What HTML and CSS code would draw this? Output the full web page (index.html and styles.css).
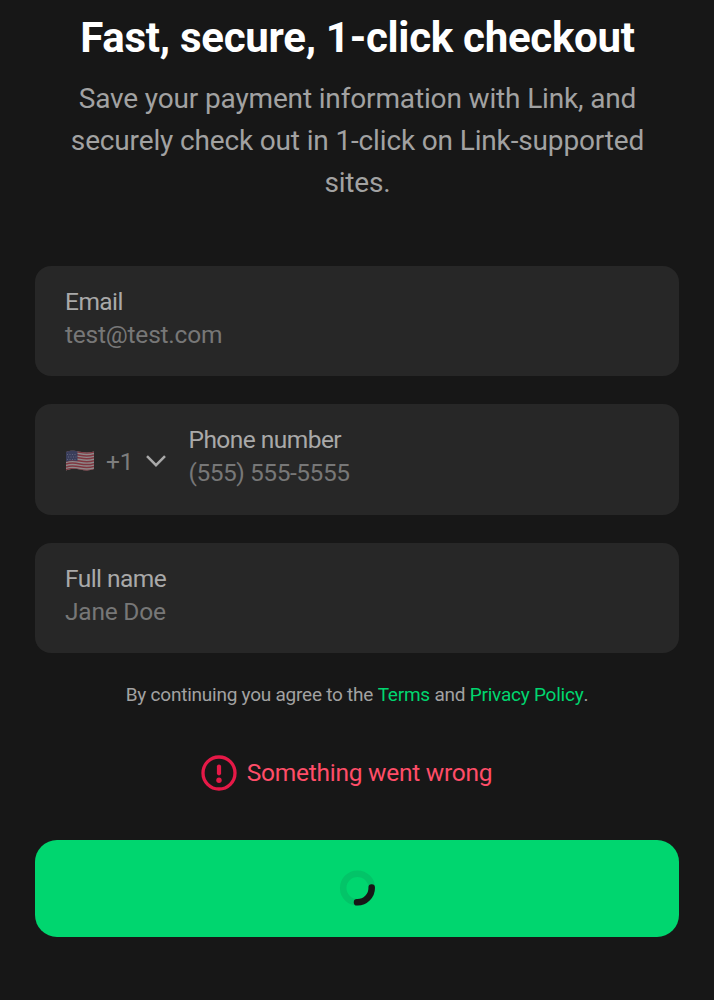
FILE: index.html
```html
<!DOCTYPE html>
<html lang="en">
<head>
<meta charset="utf-8">
<title>Link checkout</title>
<link rel="stylesheet" href="styles.css">
</head>
<body>
<main class="sheet">
  <h1 class="title">Fast, secure, 1-click checkout</h1>
  <p class="subtitle">Save your payment information with Link, and<br>securely check out in 1-click on Link-supported<br>sites.</p>
  <form class="form">
    <div class="field">
      <div class="text"><div class="label">Email</div><div class="hint">test@test.com</div></div>
    </div>
    <div class="field">
      <div class="country">
        <svg class="flag" viewBox="0 0 30 24" width="30" height="24">
          <defs><clipPath id="wave"><path d="M1 3C6 1 10 1.800 15 2.800S24 4 29 2.500v17.500c-5 2-9 1.500-14 .5S6 19.500 1 21.500Z"/></clipPath></defs>
          <g clip-path="url(#wave)">
            <path fill="#8e898a" d="M0 0h30v24H0z"/>
            <g fill="none" stroke="#803640" stroke-width="1.500">
              <path d="M1 3.500C6 1.500 10 2.300 15 3.300S24 4.500 29 3"/>
              <path d="M1 6.400C6 4.400 10 5.200 15 6.200S24 7.400 29 5.900"/>
              <path d="M1 9.300C6 7.300 10 8.100 15 9.100S24 10.300 29 8.800"/>
              <path d="M1 12.200C6 10.200 10 11 15 12S24 13.200 29 11.700"/>
              <path d="M1 15.100C6 13.100 10 13.900 15 14.900S24 16.100 29 14.600"/>
              <path d="M1 18C6 16 10 16.800 15 17.800S24 19 29 17.500"/>
              <path d="M1 20.900C6 18.900 10 19.700 15 20.700S24 21.900 29 20.400"/>
            </g>
            <path fill="#3a3e5b" d="M0 0h12.500v12C8 11 5 11.200 0 13Z"/>
            <path d="M2 5.500h10M3 8h9M2 10.500h10" stroke="#60637a" stroke-width="1" stroke-dasharray="1 1.500"/>
          </g>
        </svg>
        <span class="code">+1</span>
        <svg class="chevron" viewBox="0 0 20 12" width="20" height="12"><path d="M1 1.200 10 10.200l9-9" fill="none" stroke="#a9a9a9" stroke-width="2.500"/></svg>
      </div>
      <div class="text"><div class="label">Phone number</div><div class="hint phone">(555) 555-5555</div></div>
    </div>
    <div class="field">
      <div class="text"><div class="label">Full name</div><div class="hint">Jane Doe</div></div>
    </div>
  </form>
  <p class="terms">By continuing you agree to the <a>Terms</a> and <a>Privacy Policy</a>.</p>
  <div class="error">
    <svg viewBox="0 0 36 36" width="36" height="36"><circle cx="18" cy="18" r="16" fill="none" stroke="#e61947" stroke-width="3.300"/><path d="M18 11.500v6.800" stroke="#e61947" stroke-width="4.200" stroke-linecap="round"/><circle cx="18" cy="25.200" r="2.700" fill="#e61947"/></svg>
    <span>Something went wrong</span>
  </div>
  <button class="submit" type="button" aria-label="Loading">
    <svg viewBox="0 0 36 36" width="36" height="36"><circle cx="18.500" cy="18" r="14.300" fill="none" stroke="#03c468" stroke-width="6.500"/><path d="M32.700 17.400A14.300 14.300 0 0 1 18 32.300" fill="none" stroke="#171717" stroke-width="6.500" stroke-linecap="round"/></svg>
  </button>
</main>
</body>
</html>
```
FILE: styles.css
```css
* { box-sizing: border-box; }
body { margin: 0; background: #171717; font-family: Roboto, sans-serif; }
.sheet { height: 1000px; padding: 13px 35px 0; overflow: hidden; }
.title { margin: 0; color: #fff; font-size: 42px; line-height: 50px; font-weight: 700; letter-spacing: -.28px; text-align: center; white-space: nowrap; }
.subtitle { margin: 15px 0 0; color: #a2a2a2; font-size: 28px; line-height: 41.800px; letter-spacing: -.15px; text-align: center; white-space: nowrap; }
.title, .subtitle { padding-left: 1px; }
.form { margin-top: 62.600px; display: flex; flex-direction: column; gap: 28px; }
.field { height: 110.400px; border-radius: 16px; background: #272727; padding: 19px 30px 0; display: flex; }
.text { font-size: 24.500px; line-height: 33px; }
.label { color: #a9a9a9; letter-spacing: -.54px; }
.hint { color: #777; letter-spacing: -.22px; }
.phone { letter-spacing: -.46px; }
.country { display: flex; align-items: center; height: 76px; margin-right: 23px; }
.flag, .chevron { flex: none; }
.code { color: #7d7d7d; font-size: 24.500px; letter-spacing: -.2px; margin: 0 14px 0 11px; width: 25.500px; }
.terms { margin: 28.300px 0 0; color: #a2a2a2; font-size: 19px; line-height: 27px; letter-spacing: -.235px; text-align: center; white-space: nowrap; }
.terms a { color: #00d66f; letter-spacing: -.23px; }
.error { margin: 47px 0 0; height: 36px; padding-right: 21px; display: flex; align-items: center; justify-content: center; gap: 10px; color: #ff4d68; font-size: 24.500px; line-height: 28px; letter-spacing: -.26px; }
.submit { margin-top: 48.400px; width: 100%; height: 97px; border: 0; border-radius: 22px; background: #00d66f; display: flex; align-items: center; justify-content: center; padding: 0; }
```
